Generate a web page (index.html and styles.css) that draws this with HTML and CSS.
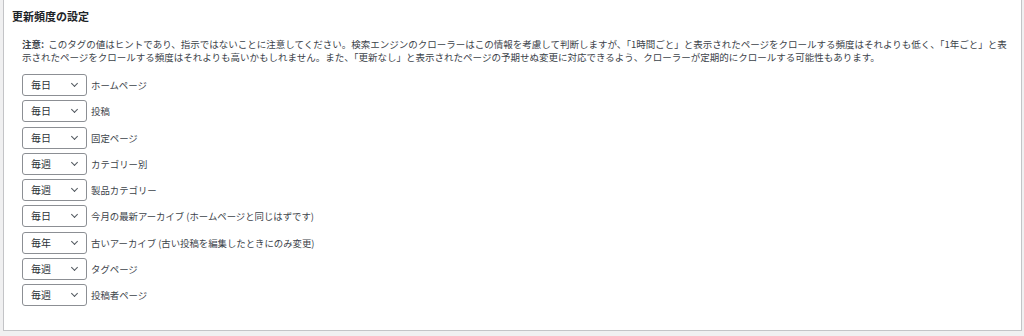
FILE: index.html
```html
<!DOCTYPE html>
<html lang="ja">
<head>
    <meta charset="UTF-8">
    <title>更新頻度の設定</title>
    <link rel="stylesheet" href="styles.css">
</head>
<body>
    <div class="postbox">
        <h2 class="postbox-title">更新頻度の設定</h2>
        <div class="inside">
            <p class="note"><strong>注意:</strong> このタグの値はヒントであり、指示ではないことに注意してください。検索エンジンのクローラーはこの情報を考慮して判断しますが、「1時間ごと」と表示されたページをクロールする頻度はそれよりも低く、「1年ごと」と表示されたページをクロールする頻度はそれよりも高いかもしれません。また、「更新なし」と表示されたページの予期せぬ変更に対応できるよう、クローラーが定期的にクロールする可能性もあります。</p>
            <ul class="freq-list">
                <li><span class="select">毎日</span><label>ホームページ</label></li>
                <li><span class="select">毎日</span><label>投稿</label></li>
                <li><span class="select">毎日</span><label>固定ページ</label></li>
                <li><span class="select">毎週</span><label>カテゴリー別</label></li>
                <li><span class="select">毎週</span><label>製品カテゴリー</label></li>
                <li><span class="select">毎日</span><label>今月の最新アーカイブ (ホームページと同じはずです)</label></li>
                <li><span class="select">毎年</span><label>古いアーカイブ (古い投稿を編集したときにのみ変更)</label></li>
                <li><span class="select">毎週</span><label>タグページ</label></li>
                <li><span class="select">毎週</span><label>投稿者ページ</label></li>
            </ul>
        </div>
    </div>
</body>
</html>
```

FILE: styles.css
```css
body {
    margin: 0;
    background-color: #f0f0f1;
    font-family: "Noto Sans CJK JP", "Noto Sans", sans-serif;
    color: #2c3338;
}

.postbox {
    margin: -1px 2px 0 3px;
    height: 332px;
    box-sizing: border-box;
    border: 1px solid #c3c4c7;
    background-color: #fff;
}

.postbox-title {
    margin: 0;
    padding: 8px 8px 6px;
    font-size: 11px;
    line-height: 17px;
    font-weight: bold;
    color: #1d2327;
}

.inside {
    padding: 0 12px 0 18px;
}

.note {
    margin: 7px 0 10px;
    font-size: 9.5px;
    line-height: 13px;
    color: #3c434a;
}

.note strong {
    font-weight: bold;
    margin-right: 2px;
}

.freq-list {
    list-style: none;
    margin: 0;
    padding: 0;
    display: flex;
    flex-direction: column;
    gap: 4.3px;
}

.freq-list li {
    display: flex;
    align-items: center;
    gap: 4px;
    font-size: 9.4px;
    color: #3c434a;
}

.select {
    position: relative;
    display: block;
    width: 65px;
    height: 22px;
    box-sizing: border-box;
    padding: 0 0 0 8px;
    border: 1px solid #8c8f94;
    border-radius: 3px;
    font-size: 10px;
    line-height: 20px;
    color: #2c3338;
}

.select::after {
    content: "";
    position: absolute;
    right: 9px;
    top: 6px;
    width: 4px;
    height: 4px;
    border-right: 1.3px solid #50575e;
    border-bottom: 1.3px solid #50575e;
    transform: rotate(45deg);
}
```
